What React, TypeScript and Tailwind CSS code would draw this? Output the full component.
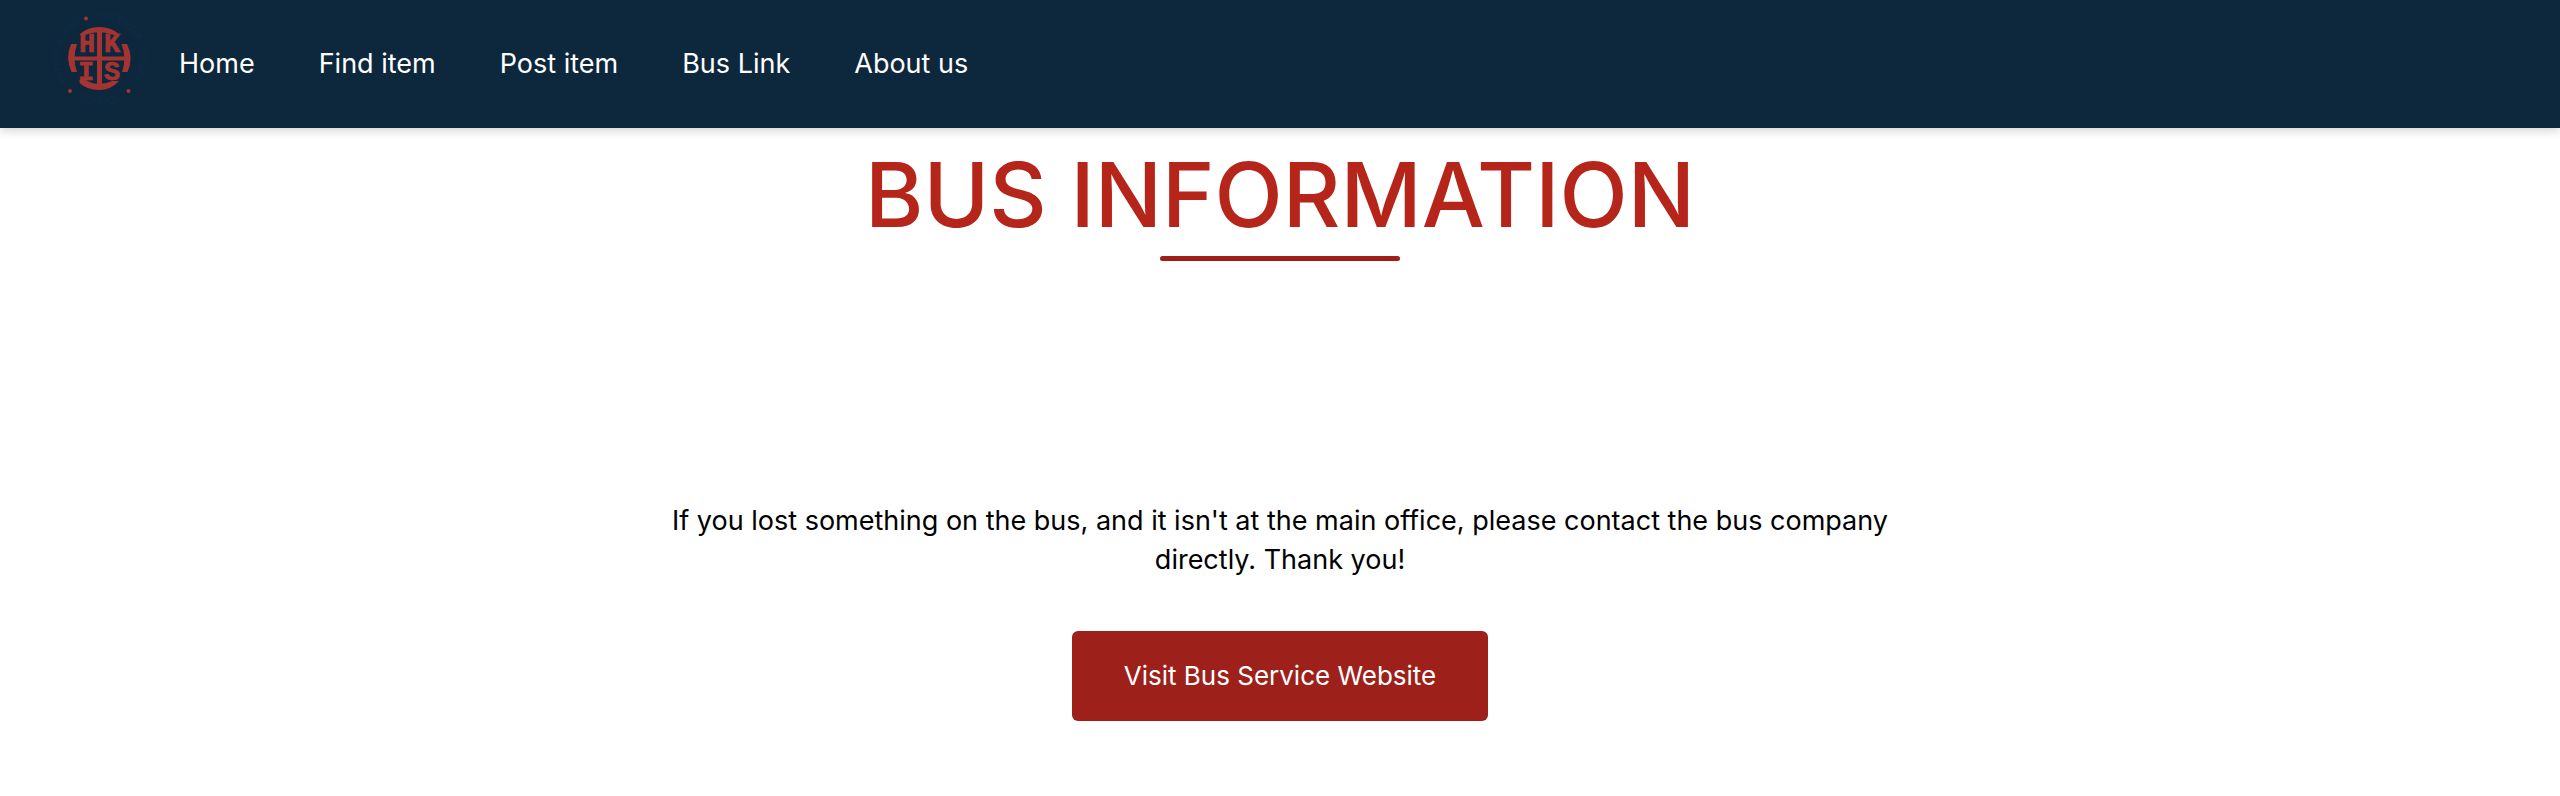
const links = ["Home", "Find item", "Post item", "Bus Link", "About us"];

function Logo() {
  return (
    <svg viewBox="0 0 100 104" className="h-[104px] w-[100px]" role="img" aria-label="HKIS">
      <defs>
        <path id="ring-top" d="M17 77 A40 40 0 1 1 83 77" />
        <path id="ring-bottom" d="M9 77 A47 47 0 0 0 91 77" />
      </defs>
      <g fill="#0e2b43" fontFamily="Liberation Sans" fontWeight="700" fontSize="11">
        <text><textPath href="#ring-top">HONG KONG</textPath></text>
        <text><textPath href="#ring-top" startOffset="84">INTERNATIONAL</textPath></text>
        <text textAnchor="middle"><textPath href="#ring-bottom" startOffset="50%">SCHOOL</textPath></text>
      </g>
      <g fill="#a33432">
        <path d="M30 30 Q38 23 49 23 Q61 23 69 30 L68 32 L54 28.500 H44 L31 32Z" />
        <path d="M47 28 H52 V80 H47Z" />
        <path d="M24 52.500 H75 V56.500 H24Z" />
        <path d="M21 40 H27 Q22 54 27 68 H21.500 Q15 54 21 40Z" />
        <path d="M77 40 H71.500 Q77 54 72 68 H77.500 Q84 54 77 40Z" />
        <path d="M29.500 76 H36 Q42 80 49 80 Q56 80 62 77 H69 Q61 86 49 86 Q37 86 29.500 79Z" />
        <circle cx="36" cy="14.500" r="2" />
        <circle cx="20" cy="87" r="2" />
        <circle cx="78.500" cy="87" r="2" />
      </g>
      <g fill="#a33432" stroke="#a33432" strokeWidth="0.7" fontFamily="Liberation Mono" fontWeight="700" fontSize="27" textAnchor="middle">
        <text x="37" y="48">H</text>
        <text x="62" y="48">K</text>
        <text x="36" y="76">I</text>
        <text x="62" y="76">S</text>
      </g>
    </svg>
  );
}

export default function App() {
  return (
    <div className="min-h-screen bg-white font-['Inter',sans-serif] text-black">
      <header className="flex h-32 items-start bg-[#0d273d] pl-[50px] shadow-[0_2px_10px_rgba(0,0,0,0.2)]">
        <a href="#home" className="pt-1"><Logo /></a>
        <nav className="flex h-full items-center gap-16 pl-[29px] text-[27px] leading-9 text-white">
          {links.map((l) => <a key={l} href="#link">{l}</a>)}
        </nav>
      </header>
      <main className="flex flex-col items-center">
        <h1 className="pt-3 text-[89px] leading-[110px] font-medium text-[#b5251a]">BUS INFORMATION</h1>
        <div className="mt-1.5 h-[5px] w-60 rounded-full bg-[#9d211a]" />
        <p className="mt-60 max-w-[1240px] text-center text-[27px] leading-[39px]">
          If you lost something on the bus, and it isn't at the main office, please contact the bus company directly. Thank you!
        </p>
        <a href="#bus" className="mt-[52px] rounded-md bg-[#9d211a] px-[52px] py-[26px] text-[26px] leading-[38px] text-white">Visit Bus Service Website</a>
      </main>
    </div>
  );
}
